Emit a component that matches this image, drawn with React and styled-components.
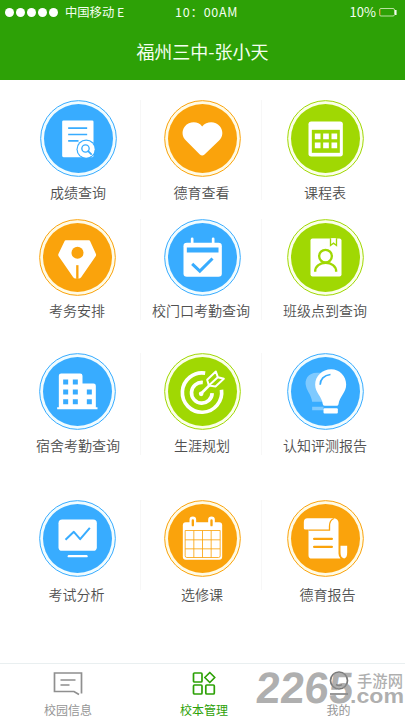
import React from 'react';
import styled, { createGlobalStyle } from 'styled-components';

const Global = createGlobalStyle`
  * { box-sizing: border-box; }
  body {
    margin: 0;
    background: #fff;
    font-family: 'Noto Sans CJK SC', 'Noto Sans', sans-serif;
  }
`;

const BLUE = '#38acff';
const ORANGE = '#faa30c';
const LIME = '#a0d803';
const TINTS = { [BLUE]: '#f1fcff', [ORANGE]: '#fffbe6', [LIME]: '#fbffea' };

const Screen = styled.div`
  position: relative;
  width: 405px;
  height: 720px;
  display: flex;
  flex-direction: column;
  overflow: hidden;
  background: #fff;
`;

const Header = styled.header`
  height: 80px;
  flex: none;
  background: #2da106;
  color: #f4fff0;
`;

const StatusBar = styled.div`
  display: grid;
  grid-template-columns: 170px 1fr auto;
  align-items: center;
  height: 24px;
  padding: 0 8px 0 5px;
  font-size: 12px;
  line-height: 24px;
  white-space: pre;
`;

const Carrier = styled.div`
  display: flex;
  align-items: center;
  gap: 7px;
  font-size: 12.3px;
`;

const Dots = styled.div`
  display: flex;
  gap: 2px;
`;

const Dot = styled.i`
  width: 9px;
  height: 9px;
  border-radius: 50%;
  background: #fff;
`;

const Clock = styled.div`
  font-size: 12.5px;
  letter-spacing: 0.75px;
`;

const Battery = styled.div`
  display: flex;
  align-items: center;
  gap: 3px;
  font-size: 13px;
`;

const Title = styled.h1`
  margin: 0;
  padding-top: 14px;
  font-size: 18px;
  line-height: 26px;
  font-weight: 400;
  text-align: center;
`;

const Menu = styled.main`
  flex: 1;
  display: flex;
  flex-direction: column;
  padding: 20px 17px 0 16px;
`;

const MenuRow = styled.section`
  display: grid;
  grid-template-columns: 125px 121px 126px;
  height: ${(p) => p.$height}px;
`;

const Cell = styled.div`
  display: flex;
  flex-direction: column;
  align-items: center;
  height: ${(p) => p.$rule}px;
  border-right: 1px solid ${(p) => (p.$last ? 'transparent' : '#f7f7f7')};
`;

const Badge = styled.svg`
  flex: none;
  display: block;
  width: 77px;
  height: 77px;
  margin-left: ${(p) => p.$shift}px;
`;

const Label = styled.span`
  margin-top: ${(p) => p.$gap}px;
  margin-left: ${(p) => p.$shift}px;
  font-size: 14px;
  line-height: 20px;
  font-weight: 350;
  white-space: nowrap;
  color: #505050;
`;

const TabBar = styled.nav`
  flex: none;
  display: grid;
  grid-template-columns: 136px 136px 133px;
  height: 57px;
  border-top: 1px solid #e9eff0;
`;

const Tab = styled.div`
  display: flex;
  flex-direction: column;
  align-items: center;
  padding-top: 7px;
  font-size: 12px;
  line-height: 18px;
  color: ${(p) => (p.$active ? '#2da106' : '#959595')};
  svg { display: block; margin-bottom: 5px; }
`;

const Watermark = styled.svg`
  position: absolute;
  left: 250px;
  top: 664px;
  width: 155px;
  height: 48px;
  font-family: 'Liberation Sans', 'Noto Sans CJK SC', sans-serif;
  font-weight: 700;
`;

/* Glyphs are drawn at three units per pixel around the centre (cx, cy). */
const glyphs = {
  grades: {
    cx: 145, cy: 132,
    art: (
      <>
        <rect x="96" y="78" width="94" height="110" rx="4" fill="#fff" />
        <path d="M114 101h57M114 120h57M114 139h31" stroke={BLUE} strokeWidth="5" />
        <circle cx="168" cy="164" r="29" fill={BLUE} />
        <circle cx="168" cy="164" r="25.5" fill="#fff" />
        <circle cx="166" cy="162" r="11" fill="none" stroke={BLUE} strokeWidth="4" />
        <path d="M174 170l9 9" stroke={BLUE} strokeWidth="5" strokeLinecap="round" />
      </>
    ),
  },
  heart: {
    cx: 156, cy: 132,
    art: <path d="M155 96C143 79 116 80 103 96C92 110 95 128 107 139L148 180Q155 186 162 180L205 139C218 127 219 109 208 95C194 79 168 80 155 96Z" fill="#fff" />,
  },
  timetable: {
    cx: 165, cy: 132,
    art: (
      <>
        <rect x="114" y="81" width="103" height="105" rx="8" fill="#fff" />
        <path d="M124 106h84v69h-84z" fill={LIME} />
        <path d="M133 117h17v17h-17zM158 117h17v17h-17zM183 117h17v17h-17zM133 144h17v17h-17zM158 144h17v17h-17zM183 144h17v17h-17z" fill="#fff" />
      </>
    ),
  },
  pen: {
    cx: 142, cy: 138,
    art: (
      <>
        <path d="M107 86h69q3 0 4 3l17 38q2 4-1 8l-43 62q-3 4-7 4h-10q-4 0-7-4l-43-62q-3-4-1-8l18-38q1-3 4-3z" fill="#fff" />
        <circle cx="142" cy="124" r="18" fill={ORANGE} />
        <path d="M141.500 161v41" stroke={ORANGE} strokeWidth="7" />
      </>
    ),
  },
  gate: {
    cx: 156, cy: 138,
    art: (
      <>
        <rect x="99" y="94" width="115" height="102" rx="10" fill="#fff" />
        <path d="M125 98V82M188 98V82" stroke="#fff" strokeWidth="8" strokeLinecap="round" />
        <path d="M109 108h95v15h-95z" fill={BLUE} />
        <path d="M125 157l23 22 38-38" fill="none" stroke={BLUE} strokeWidth="9" />
      </>
    ),
  },
  roll: {
    cx: 165, cy: 138,
    art: (
      <>
        <rect x="120" y="81" width="93" height="114" rx="6" fill="#fff" />
        <path d="M180 80v22l9-7 9 7V80" fill="#fff" stroke={LIME} strokeWidth="4" />
        <circle cx="165" cy="134" r="19" fill="none" stroke={LIME} strokeWidth="7" />
        <path d="M134 181C133 145 198 145 197 181" fill="none" stroke={LIME} strokeWidth="7" />
      </>
    ),
  },
  dorm: {
    cx: 142, cy: 141,
    art: (
      <>
        <path d="M81 194v-6h5V94q0-7 7-7h57q7 0 7 7v23h33q7 0 7 7v64h5v6z" fill="#fff" />
        <path d="M99 105h15v15H99zM128 105h15v15h-15zM99 135h15v15H99zM128 135h15v15h-15zM170 135h15v15h-15zM99 164h15v15H99zM128 164h15v15h-15zM170 164h15v15h-15z" fill={BLUE} />
      </>
    ),
  },
  target: {
    cx: 157, cy: 141,
    art: (
      <g fill="none" stroke="#fff">
        <path d="M165 86A59 59 0 1 0 214 136" strokeWidth="11" />
        <path d="M158 114A31 31 0 1 0 186 146" strokeWidth="11" />
        <path d="M153 147l26-26" strokeWidth="8" />
        <circle cx="153" cy="148" r="7" fill="#fff" stroke="none" />
        <path d="M176 123l-5-17 26-25 6 17 18 5-25 23zM176 123l27-25" strokeWidth="6" strokeLinejoin="round" />
      </g>
    ),
  },
  bulb: {
    cx: 526, cy: 141,
    art: (
      <>
        <path d="M503 85C476 83 461 104 468 127C472 143 483 151 486 172h34V85zM486 187h34v10h-34z" fill="#fff" opacity=".36" />
        <path d="M543 74C517 74 495 94 495 120C495 145 515 155 518 179Q519 184 524 184H560Q564 184 565 179C568 156 588 145 588 120C588 94 568 74 543 74Z" fill="#fff" />
        <path d="M510 121C510 105 521 92 541 90" fill="none" stroke={BLUE} strokeWidth="5" />
        <rect x="520" y="191" width="43" height="16" rx="3" fill="#fff" />
      </>
    ),
  },
  analysis: {
    cx: 142, cy: 131,
    art: (
      <>
        <rect x="85" y="74" width="115" height="94" rx="11" fill="#fff" />
        <path d="M106 135l25-24 19 22 29-34" fill="none" stroke={BLUE} strokeWidth="6" strokeLinejoin="round" />
        <path d="M116 184h53" stroke="#fff" strokeWidth="7" strokeLinecap="round" />
      </>
    ),
  },
  elective: {
    cx: 157, cy: 131,
    art: (
      <>
        <rect x="98" y="82" width="118" height="113" rx="9" fill="#fff" />
        <g strokeLinecap="round">
          <path d="M128 92V75M184 92V75" stroke="#fff" strokeWidth="20" />
          <path d="M128 91V77M184 91V77" stroke={ORANGE} strokeWidth="7" />
        </g>
        <path d="M105 107h105v76q0 5-5 5h-95q-5 0-5-5zM131 107v81M157 107v81M183 107v81M105 135h105M105 162h105" fill="none" stroke={ORANGE} strokeWidth="2.500" />
      </>
    ),
  },
  report: {
    cx: 526, cy: 131,
    art: (
      <>
        <path d="M548 70H472q-11 0-11 12v18q0 4 5 4H475V181q0 10 10 10h86q-6-6-6-15V84q0-14-17-14z" fill="#fff" />
        <path d="M475 106h63V94q0-18 13-23" fill="none" stroke={ORANGE} strokeWidth="4" />
        <path d="M492 132h53M492 156h53" stroke={ORANGE} strokeWidth="7" strokeLinecap="round" />
        <path d="M571 153h20v21q0 15-9 17-11-2-11-17z" fill="#fff" />
      </>
    ),
  },
};

const rows = [
  { height: 119, rule: 100, gap: 5, items: [
    ['grades', '成绩查询', BLUE, 0, 0], ['heart', '德育查看', ORANGE, 2, 1], ['timetable', '课程表', LIME, 1, 1],
  ] },
  { height: 134, rule: 101, gap: 4, items: [
    ['pen', '考务安排', ORANGE, -2, -2], ['gate', '校门口考勤查询', BLUE, 2, 0], ['roll', '班级点到查询', LIME, 1, 1],
  ] },
  { height: 147, rule: 102, gap: 5, items: [
    ['dorm', '宿舍考勤查询', BLUE, -2, 0], ['target', '生涯规划', LIME, 2, 2], ['bulb', '认知评测报告', BLUE, 1, 1],
  ] },
  { height: 163, rule: 90, gap: 7, items: [
    ['analysis', '考试分析', BLUE, -2, -3], ['elective', '选修课', ORANGE, 2, 2], ['report', '德育报告', ORANGE, 1, 6],
  ] },
];

function MenuItem({ name, label, color, shift, labelShift, gap, rule, last }) {
  const { cx, cy, art } = glyphs[name];
  return (
    <Cell $rule={rule} $last={last}>
      <Badge $shift={shift} viewBox={`${cx - 115.5} ${cy - 115.5} 231 231`}>
        <circle cx={cx} cy={cy} r="113.500" fill={TINTS[color]} stroke={color} strokeWidth="3" />
        <circle cx={cx} cy={cy} r="103.500" fill={color} />
        {art}
      </Badge>
      <Label $gap={gap} $shift={labelShift}>{label}</Label>
    </Cell>
  );
}

export default function App() {
  return (
    <>
      <Global />
      <Screen>
        <Header>
          <StatusBar>
            <Carrier>
              <Dots><Dot /><Dot /><Dot /><Dot /><Dot /></Dots>
              <span>中国移动 E</span>
            </Carrier>
            <Clock>10：00AM</Clock>
            <Battery>
              10%
              <svg width="18" height="9" viewBox="0 0 18 9">
                <rect x=".5" y=".5" width="15" height="7.500" rx="1.500" fill="none" stroke="#b9e29f" />
                <path d="M1 1.500v5.500" stroke="#e08a18" strokeWidth="1" />
                <path d="M16.800 2v5" stroke="#fff" strokeWidth="1.500" />
              </svg>
            </Battery>
          </StatusBar>
          <Title>福州三中-张小天</Title>
        </Header>
        <Menu>
          {rows.map((row) => (
            <MenuRow key={row.height} $height={row.height}>
              {row.items.map(([name, label, color, shift, labelShift], i) => (
                <MenuItem key={name} name={name} label={label} color={color} shift={shift}
                  labelShift={labelShift} gap={row.gap} rule={row.rule} last={i === 2} />
              ))}
            </MenuRow>
          ))}
        </Menu>
        <TabBar>
          <Tab>
            <svg width="30" height="25" viewBox="0 0 30 25" fill="none" stroke="#8f8f8f" strokeWidth="1.700">
              <path d="M28.500 22.500V2h-27v18.500H21l5 3M7.500 9h15M7.500 14h9" />
            </svg>
            校园信息
          </Tab>
          <Tab $active>
            <svg width="24" height="25" viewBox="0 0 24 25" fill="none" stroke="#2da106" strokeWidth="1.700">
              <rect x="1.500" y="2" width="8.500" height="9" rx="1" />
              <rect x="1.500" y="14" width="8.500" height="9" rx="1" />
              <rect x="13.800" y="14" width="8.500" height="9" rx="1" />
              <path d="M17.800 1.500l5 5-5 5-5-5z" strokeLinejoin="round" />
            </svg>
            校本管理
          </Tab>
          <Tab>
            <svg width="24" height="25" viewBox="0 0 24 25" fill="none" stroke="#777" strokeWidth="1.700">
              <circle cx="12" cy="9.500" r="8.500" />
              <path d="M9 13.500q3 2 6 0M3 23h18" />
            </svg>
            我的
          </Tab>
        </TabBar>
        <Watermark viewBox="0 0 155 48" fill="#8c8c8c" fillOpacity=".7">
          <text transform="translate(5 39) skewX(-5)" fontSize="44" textLength="97" lengthAdjust="spacingAndGlyphs">2265</text>
          <text x="107" y="22.500" fontSize="15.500" fontWeight="500" textLength="46" lengthAdjust="spacingAndGlyphs">手游网</text>
          <text x="100" y="39" fontSize="20" textLength="54" lengthAdjust="spacingAndGlyphs">.com</text>
        </Watermark>
      </Screen>
    </>
  );
}
